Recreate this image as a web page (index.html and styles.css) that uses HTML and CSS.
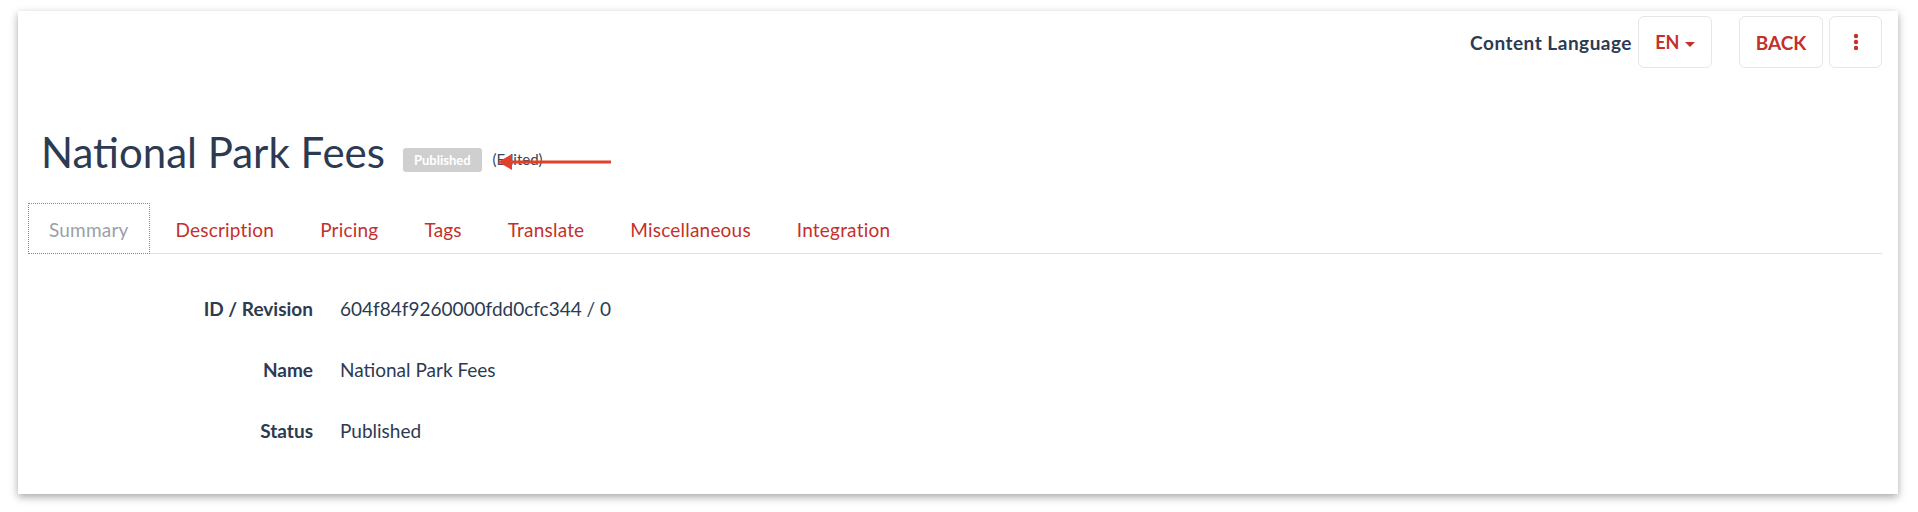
FILE: index.html
```html
<!DOCTYPE html>
<html lang="en">

<head>
    <meta charset="UTF-8">
    <meta name="viewport" content="width=device-width, initial-scale=1.0">
    <title>National Park Fees</title>
    <link rel="stylesheet" href="styles.css">
</head>

<body>
    <div class="window">
        <div class="toolbar">
            <span class="lang-label">Content Language</span>
            <button class="btn btn-lang">EN <span class="caret"></span></button>
            <button class="btn btn-back">BACK</button>
            <button class="btn btn-more" aria-label="More">
                <svg width="6" height="18" viewBox="0 0 6 18">
                    <circle cx="3" cy="3" r="2.2" fill="#c4302b" />
                    <circle cx="3" cy="9" r="2.2" fill="#c4302b" />
                    <circle cx="3" cy="15" r="2.2" fill="#c4302b" />
                </svg>
            </button>
        </div>

        <div class="heading">
            <h1 class="title">National Park Fees</h1>
            <span class="badge">Published</span>
            <span class="edited">(Edited)</span>

            <!-- annotation arrow -->
            <svg class="arrow" width="120" height="20" viewBox="0 0 120 20">
                <line x1="12" y1="10" x2="114" y2="10" stroke="#e3402b" stroke-width="3" />
                <polygon points="1,10 15,2 15,18" fill="#e3402b" />
            </svg>
        </div>

        <ul class="tabs">
            <li class="tab active">Summary</li>
            <li class="tab">Description</li>
            <li class="tab">Pricing</li>
            <li class="tab">Tags</li>
            <li class="tab">Translate</li>
            <li class="tab">Miscellaneous</li>
            <li class="tab">Integration</li>
        </ul>

        <dl class="details">
            <div class="row">
                <dt>ID / Revision</dt>
                <dd>604f84f9260000fdd0cfc344 / 0</dd>
            </div>
            <div class="row">
                <dt>Name</dt>
                <dd>National Park Fees</dd>
            </div>
            <div class="row">
                <dt>Status</dt>
                <dd>Published</dd>
            </div>
        </dl>
    </div>
</body>

</html>
```

FILE: styles.css
```css
* {
    margin: 0;
    padding: 0;
    box-sizing: border-box;
}

body {
    font-family: 'Lato', 'Open Sans', sans-serif;
    background: #fff;
    color: #2c3a52;
    padding: 11px 20px 18px 18px;
}

.window {
    background: #fff;
    height: 483px;
    box-shadow: 0 3px 8px rgba(0, 0, 0, 0.35);
    padding: 5px 16px 0 10px;
}

.toolbar {
    display: flex;
    justify-content: flex-end;
    align-items: center;
}

.lang-label {
    font-size: 19px;
    font-weight: 700;
    letter-spacing: 0.5px;
    margin-right: 6px;
}

.btn {
    font-family: inherit;
    background: #fff;
    border: 1px solid #e6e6e6;
    border-radius: 6px;
    height: 52px;
    color: #c4302b;
    font-size: 18px;
    font-weight: 700;
    cursor: pointer;
}

.btn-lang {
    width: 74px;
    margin-right: 27px;
}

.caret {
    display: inline-block;
    width: 0;
    height: 0;
    border-left: 5px solid transparent;
    border-right: 5px solid transparent;
    border-top: 5px solid #c4302b;
    vertical-align: middle;
    margin-left: 1px;
}

.btn-back {
    width: 84px;
    margin-right: 6px;
    font-size: 19px;
}

.btn-more {
    width: 53px;
    display: flex;
    align-items: center;
    justify-content: center;
}

.heading {
    position: relative;
    display: flex;
    align-items: baseline;
    padding-left: 13px;
    margin-top: 59px;
}

.title {
    font-size: 42px;
    font-weight: 400;
    line-height: 1.2;
    margin-right: 18px;
}

.badge {
    background: #cfcfcf;
    color: #fff;
    font-size: 13px;
    font-weight: 700;
    border-radius: 3px;
    padding: 4px 11px;
    margin-right: 11px;
    position: relative;
    top: -3px;
}

.edited {
    font-size: 15px;
    color: #3b4658;
    position: relative;
    top: -3px;
}

.arrow {
    position: absolute;
    left: 469px;
    top: 25px;
}

.tabs {
    list-style: none;
    display: flex;
    border-bottom: 1px solid #e2e2e2;
    margin-top: 26px;
}

.tab {
    font-size: 19px;
    letter-spacing: 0.2px;
    color: #c4302b;
    padding: 0 18px;
    height: 51px;
    line-height: 51px;
    margin-right: 8px;
    margin-bottom: -1px;
    border: 1px solid transparent;
}

.tab.active {
    color: #9aa0ac;
    border: 1px dotted #8a8a8a;
    background: #fff;
    padding: 0 20px;
    margin-right: 7px;
}

.details {
    margin-top: 24px;
}

.row {
    display: flex;
    align-items: center;
    height: 61px;
}

.row dt {
    width: 285px;
    text-align: right;
    font-weight: 700;
    font-size: 19px;
}

.row dd {
    margin-left: 27px;
    font-size: 19px;
}
```
